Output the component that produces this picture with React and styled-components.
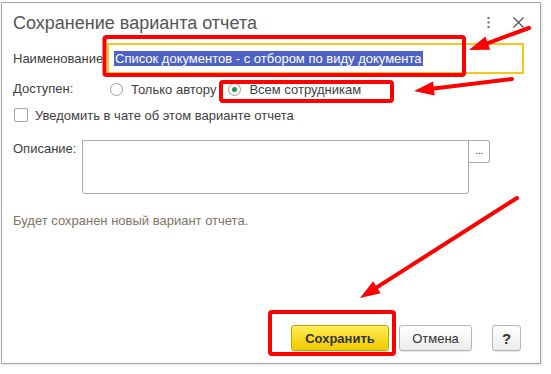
import React from "react";
import styled, { createGlobalStyle } from "styled-components";

const GlobalStyle = createGlobalStyle`
  html, body { margin: 0; padding: 0; background: #ffffff; }
  body { font-family: "Liberation Sans", Arial, sans-serif; font-size: 13px; color: #404040; }
  * { box-sizing: border-box; }
`;

const Page = styled.div`
  position: relative;
  width: 551px;
  height: 374px;
  padding: 2px 0 0 1px;
`;

const Dialog = styled.div`
  width: 540px;
  height: 362px;
  border: 1px solid #a6a6a6;
  box-shadow: 1px 1px 3px rgba(0, 0, 0, 0.12);
  background: #fff;
  display: flex;
  flex-direction: column;
  padding: 0 15px 0 11px;
`;

const Header = styled.div`
  height: 40px;
  display: flex;
  align-items: center;
  padding-bottom: 1px;
`;

const Title = styled.div`
  flex: 1;
  font-size: 18px;
  line-height: 22px;
  color: #555555;
`;

const HeaderIcons = styled.div`
  display: flex;
  align-items: center;
  gap: 23px;
  margin-right: 1px;
  color: #555;
`;

const Row = styled.div`
  display: flex;
  align-items: ${(p) => (p.$top ? "flex-start" : "center")};
  margin-top: ${(p) => p.$mt || 0}px;
  height: ${(p) => p.$h}px;
`;

const Label = styled.div`
  width: ${(p) => p.$w}px;
  flex: none;
  line-height: 18px;
  color: #404040;
  white-space: nowrap;
`;

const NameInput = styled.div`
  width: 417px;
  height: 31px;
  border: 2px solid #f7c71b;
  display: flex;
  align-items: center;
  padding-left: 5px;
`;

const Selected = styled.span`
  background: #4d62c4;
  color: #fff;
  line-height: 15px;
  padding: 0 1px;
  white-space: nowrap;
`;

const RadioGroup = styled.div`
  display: flex;
  align-items: center;
  gap: 12px;
  margin-left: 3px;
`;

const RadioItem = styled.label`
  display: flex;
  align-items: center;
  gap: 8px;
  white-space: nowrap;
  color: #404040;
`;

const RadioCircle = styled.span`
  width: 13px;
  height: 13px;
  border: 1px solid #9c9c9c;
  border-radius: 50%;
  background: #fff;
  display: flex;
  align-items: center;
  justify-content: center;
  &::after {
    content: "";
    width: 5px;
    height: 5px;
    border-radius: 50%;
    background: ${(p) => (p.$checked ? "#1c9a48" : "transparent")};
  }
`;

const CheckBox = styled.span`
  width: 14px;
  height: 14px;
  border: 1px solid #a3a3a3;
  border-radius: 2px;
  margin-left: 1px;
  margin-right: 7px;
  background: #fff;
`;

const TextArea = styled.div`
  width: 387px;
  height: 54px;
  border: 1px solid #a8a8a8;
  border-radius: 0 0 3px 3px;
  background: #fff;
`;

const DotsButton = styled.div`
  width: 21px;
  height: 23px;
  border: 1px solid #a8a8a8;
  border-left: none;
  border-radius: 0 3px 3px 0;
  background: #fff;
  display: flex;
  align-items: center;
  justify-content: center;
  font-size: 11px;
  color: #333;
  letter-spacing: -0.5px;
  padding-bottom: 3px;
`;

const Info = styled.div`
  margin-top: 18px;
  line-height: 18px;
  color: #7e7563;
`;

const Footer = styled.div`
  margin-top: auto;
  padding: 0 4px 12px 0;
  display: flex;
  justify-content: flex-end;
  align-items: center;
`;

const Button = styled.div`
  height: 26px;
  width: ${(p) => p.$w}px;
  margin-right: ${(p) => p.$mr || 0}px;
  border-radius: 3px;
  border: 1px solid ${(p) => (p.$primary ? "#c4a300" : "#b5b5b5")};
  background: ${(p) =>
    p.$primary
      ? "linear-gradient(#ffee55, #f1c900)"
      : "linear-gradient(#ffffff, #ececec)"};
  box-shadow: 0 1px 1px rgba(0, 0, 0, 0.1);
  display: flex;
  align-items: center;
  justify-content: center;
  font-size: ${(p) => (p.$big ? 15 : 13)}px;
  font-weight: ${(p) => (p.$primary || p.$big ? "bold" : "normal")};
  color: #333;
`;

const Overlay = styled.svg`
  position: absolute;
  left: 0;
  top: 0;
  pointer-events: none;
`;

function Arrow({ x1, y1, x2, y2 }) {
  const dx = x2 - x1;
  const dy = y2 - y1;
  const len = Math.hypot(dx, dy);
  const ux = dx / len;
  const uy = dy / len;
  const hl = 20;
  const hw = 7;
  const bx = x2 - ux * hl;
  const by = y2 - uy * hl;
  const px = -uy;
  const py = ux;
  const pts = `${x2},${y2} ${bx + px * hw},${by + py * hw} ${bx - px * hw},${by - py * hw}`;
  return (
    <g>
      <line x1={x1} y1={y1} x2={bx + ux * 2} y2={by + uy * 2} stroke="#ff0000" strokeWidth="4" strokeLinecap="round" />
      <polygon points={pts} fill="#ff0000" />
    </g>
  );
}

export default function App() {
  return (
    <Page>
      <GlobalStyle />
      <Dialog>
        <Header>
          <Title>Сохранение варианта отчета</Title>
          <HeaderIcons>
            <svg width="3" height="11" viewBox="0 0 3 11">
              <rect x="0.5" y="0" width="2" height="2" fill="#666" />
              <rect x="0.5" y="4.5" width="2" height="2" fill="#666" />
              <rect x="0.5" y="9" width="2" height="2" fill="#666" />
            </svg>
            <svg width="11" height="11" viewBox="0 0 11 11">
              <path d="M0.5 0.5 L10.5 10.5 M10.5 0.5 L0.5 10.5" stroke="#555" strokeWidth="1.3" />
            </svg>
          </HeaderIcons>
        </Header>

        <Row $h={31}>
          <Label $w={94}>Наименование</Label>
          <NameInput>
            <Selected>Список документов - с отбором по виду документа</Selected>
          </NameInput>
        </Row>

        <Row $h={20} $mt={5}>
          <Label $w={94}>Доступен:</Label>
          <RadioGroup>
            <RadioItem>
              <RadioCircle />
              Только автору
            </RadioItem>
            <RadioItem>
              <RadioCircle $checked />
              Всем сотрудникам
            </RadioItem>
          </RadioGroup>
        </Row>

        <Row $h={20} $mt={6}>
          <CheckBox />
          <span>Уведомить в чате об этом варианте отчета</span>
        </Row>

        <Row $h={54} $mt={15} $top>
          <Label $w={69}>Описание:</Label>
          <TextArea />
          <DotsButton>...</DotsButton>
        </Row>

        <Info>Будет сохранен новый вариант отчета.</Info>

        <Footer>
          <Button $primary $w={98} $mr={10}>Сохранить</Button>
          <Button $w={73} $mr={20}>Отмена</Button>
          <Button $big $w={29}>?</Button>
        </Footer>
      </Dialog>

      <Overlay width="551" height="374" viewBox="0 0 551 374">
        <rect x="104.5" y="37" width="359.5" height="38" rx="2" fill="none" stroke="#ff0000" strokeWidth="4" />
        <rect x="221" y="82" width="171" height="19" rx="2" fill="none" stroke="#ff0000" strokeWidth="4" />
        <rect x="270" y="312" width="124" height="42" rx="2" fill="none" stroke="#ff0000" strokeWidth="4" />
        <Arrow x1={529} y1={28} x2={469} y2={50} />
        <Arrow x1={512} y1={79} x2={414} y2={91} />
        <Arrow x1={517} y1={198} x2={360} y2={298} />
      </Overlay>
    </Page>
  );
}
